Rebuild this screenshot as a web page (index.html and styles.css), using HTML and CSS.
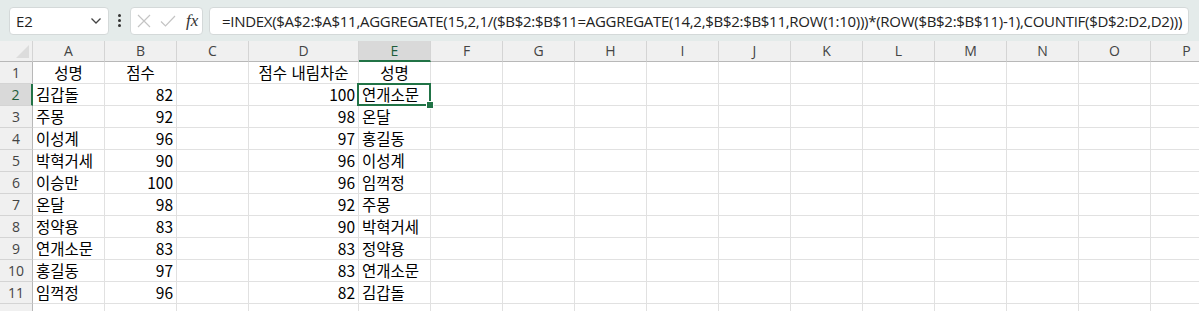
FILE: index.html
```html
<!DOCTYPE html>
<html lang="ko">
<head>
    <meta charset="UTF-8">
    <title>Excel - INDEX AGGREGATE</title>
    <link rel="stylesheet" href="styles.css">
</head>
<body>
    <div class="toolbar">
        <div class="name-box">
            <span>E2</span>
            <svg class="chevron" width="12" height="8" viewBox="0 0 12 8"><path d="M1.5 1.5 L6 6 L10.5 1.5" fill="none" stroke="#444" stroke-width="1.3"/></svg>
        </div>
        <div class="dots"><i></i><i></i><i></i></div>
        <div class="fx-box">
            <svg width="16" height="16" viewBox="0 0 16 16"><path d="M2 2 L14 14 M14 2 L2 14" stroke="#c4c4c4" stroke-width="1.2"/></svg>
            <svg width="18" height="16" viewBox="0 0 18 16"><path d="M2 8.5 L6.5 13 L16 3" fill="none" stroke="#c4c4c4" stroke-width="1.2"/></svg>
            <span class="fx">fx</span>
        </div>
        <div class="formula">=INDEX($A$2:$A$11,AGGREGATE(15,2,1/($B$2:$B$11=AGGREGATE(14,2,$B$2:$B$11,ROW(1:10)))*(ROW($B$2:$B$11)-1),COUNTIF($D$2:D2,D2)))</div>
    </div>

    <div class="sheet">
        <div class="corner"></div>
        <div class="col">A</div><div class="col">B</div><div class="col">C</div><div class="col">D</div>
        <div class="col active">E</div><div class="col">F</div><div class="col">G</div><div class="col">H</div>
        <div class="col">I</div><div class="col">J</div><div class="col">K</div><div class="col">L</div>
        <div class="col">M</div><div class="col">N</div><div class="col">O</div><div class="col">P</div>

        <div class="row">1</div>
        <div class="cell c">성명</div><div class="cell c">점수</div><div class="cell"></div>
        <div class="cell c">점수 내림차순</div><div class="cell c">성명</div>
        <div class="cell"></div><div class="cell"></div><div class="cell"></div><div class="cell"></div><div class="cell"></div><div class="cell"></div><div class="cell"></div><div class="cell"></div><div class="cell"></div><div class="cell"></div><div class="cell"></div>

        <div class="row active">2</div>
        <div class="cell">김갑돌</div><div class="cell r">82</div><div class="cell"></div>
        <div class="cell r">100</div><div class="cell selected">연개소문</div>
        <div class="cell"></div><div class="cell"></div><div class="cell"></div><div class="cell"></div><div class="cell"></div><div class="cell"></div><div class="cell"></div><div class="cell"></div><div class="cell"></div><div class="cell"></div><div class="cell"></div>

        <div class="row">3</div>
        <div class="cell">주몽</div><div class="cell r">92</div><div class="cell"></div>
        <div class="cell r">98</div><div class="cell">온달</div>
        <div class="cell"></div><div class="cell"></div><div class="cell"></div><div class="cell"></div><div class="cell"></div><div class="cell"></div><div class="cell"></div><div class="cell"></div><div class="cell"></div><div class="cell"></div><div class="cell"></div>

        <div class="row">4</div>
        <div class="cell">이성계</div><div class="cell r">96</div><div class="cell"></div>
        <div class="cell r">97</div><div class="cell">홍길동</div>
        <div class="cell"></div><div class="cell"></div><div class="cell"></div><div class="cell"></div><div class="cell"></div><div class="cell"></div><div class="cell"></div><div class="cell"></div><div class="cell"></div><div class="cell"></div><div class="cell"></div>

        <div class="row">5</div>
        <div class="cell">박혁거세</div><div class="cell r">90</div><div class="cell"></div>
        <div class="cell r">96</div><div class="cell">이성계</div>
        <div class="cell"></div><div class="cell"></div><div class="cell"></div><div class="cell"></div><div class="cell"></div><div class="cell"></div><div class="cell"></div><div class="cell"></div><div class="cell"></div><div class="cell"></div><div class="cell"></div>

        <div class="row">6</div>
        <div class="cell">이승만</div><div class="cell r">100</div><div class="cell"></div>
        <div class="cell r">96</div><div class="cell">임꺽정</div>
        <div class="cell"></div><div class="cell"></div><div class="cell"></div><div class="cell"></div><div class="cell"></div><div class="cell"></div><div class="cell"></div><div class="cell"></div><div class="cell"></div><div class="cell"></div><div class="cell"></div>

        <div class="row">7</div>
        <div class="cell">온달</div><div class="cell r">98</div><div class="cell"></div>
        <div class="cell r">92</div><div class="cell">주몽</div>
        <div class="cell"></div><div class="cell"></div><div class="cell"></div><div class="cell"></div><div class="cell"></div><div class="cell"></div><div class="cell"></div><div class="cell"></div><div class="cell"></div><div class="cell"></div><div class="cell"></div>

        <div class="row">8</div>
        <div class="cell">정약용</div><div class="cell r">83</div><div class="cell"></div>
        <div class="cell r">90</div><div class="cell">박혁거세</div>
        <div class="cell"></div><div class="cell"></div><div class="cell"></div><div class="cell"></div><div class="cell"></div><div class="cell"></div><div class="cell"></div><div class="cell"></div><div class="cell"></div><div class="cell"></div><div class="cell"></div>

        <div class="row">9</div>
        <div class="cell">연개소문</div><div class="cell r">83</div><div class="cell"></div>
        <div class="cell r">83</div><div class="cell">정약용</div>
        <div class="cell"></div><div class="cell"></div><div class="cell"></div><div class="cell"></div><div class="cell"></div><div class="cell"></div><div class="cell"></div><div class="cell"></div><div class="cell"></div><div class="cell"></div><div class="cell"></div>

        <div class="row">10</div>
        <div class="cell">홍길동</div><div class="cell r">97</div><div class="cell"></div>
        <div class="cell r">83</div><div class="cell">연개소문</div>
        <div class="cell"></div><div class="cell"></div><div class="cell"></div><div class="cell"></div><div class="cell"></div><div class="cell"></div><div class="cell"></div><div class="cell"></div><div class="cell"></div><div class="cell"></div><div class="cell"></div>

        <div class="row">11</div>
        <div class="cell">임꺽정</div><div class="cell r">96</div><div class="cell"></div>
        <div class="cell r">82</div><div class="cell">김갑돌</div>
        <div class="cell"></div><div class="cell"></div><div class="cell"></div><div class="cell"></div><div class="cell"></div><div class="cell"></div><div class="cell"></div><div class="cell"></div><div class="cell"></div><div class="cell"></div><div class="cell"></div>

        <div class="row"></div>
        <div class="cell"></div><div class="cell"></div><div class="cell"></div><div class="cell"></div><div class="cell"></div>
        <div class="cell"></div><div class="cell"></div><div class="cell"></div><div class="cell"></div><div class="cell"></div><div class="cell"></div><div class="cell"></div><div class="cell"></div><div class="cell"></div><div class="cell"></div><div class="cell"></div>
    </div>
</body>
</html>
```

FILE: styles.css
```css
* {
    margin: 0;
    padding: 0;
    box-sizing: border-box;
}

body {
    width: 1199px;
    height: 311px;
    overflow: hidden;
    background: white;
    font-family: 'Open Sans', 'Noto Sans', sans-serif;
}

/* formula bar */

.toolbar {
    height: 41px;
    background: #e4ebea;
    display: flex;
    align-items: center;
    padding-left: 9px;
}

.name-box {
    width: 100px;
    height: 28px;
    background: white;
    border: 1px solid #d4d9d9;
    border-radius: 4px;
    display: flex;
    align-items: center;
    justify-content: space-between;
    padding: 0 6px;
    font-size: 15px;
    color: #222;
}

.dots {
    width: 21px;
    display: flex;
    flex-direction: column;
    align-items: center;
    gap: 2px;
}

.dots i {
    width: 3px;
    height: 3px;
    background: #333;
    border-radius: 50%;
}

.fx-box {
    width: 73px;
    height: 28px;
    background: white;
    border: 1px solid #d4d9d9;
    border-radius: 4px;
    display: flex;
    align-items: center;
    gap: 7px;
    padding-left: 5px;
}

.fx {
    font-family: 'Liberation Serif', serif;
    font-style: italic;
    font-size: 17px;
    color: #333;
    margin-left: 2px;
}

.formula {
    margin-left: 6px;
    width: 980px;
    height: 28px;
    background: white;
    border: 1px solid #d4d9d9;
    border-radius: 4px;
    padding-left: 12px;
    line-height: 26px;
    font-size: 15px;
    letter-spacing: -0.29px;
    color: #222;
    white-space: nowrap;
    overflow: hidden;
}

/* grid */

.sheet {
    display: grid;
    grid-template-columns: 33px 72px 72px 72px 110px 72px repeat(11, 72px);
    grid-template-rows: 21px;
    grid-auto-rows: 22px;
    font-family: 'Noto Sans CJK KR', sans-serif;
    font-size: 15.5px;
    color: #000;
}

.corner {
    background: #f0f0f0;
    border-right: 1px solid #d4d4d4;
    border-bottom: 1px solid #b8b8b8;
    position: relative;
}

.corner::after {
    content: "";
    position: absolute;
    right: 3px;
    bottom: 3px;
    border-left: 13px solid transparent;
    border-bottom: 13px solid #dcdcdc;
}

.col {
    background: #f0f0f0;
    border-right: 1px solid #d4d4d4;
    border-bottom: 1px solid #b8b8b8;
    text-align: center;
    font-family: 'Open Sans', sans-serif;
    font-size: 14px;
    line-height: 20px;
    color: #444;
}

.col.active {
    background: #d9d9d9;
    border-bottom: 2px solid #217346;
    color: #1d5c3a;
}

.row {
    background: #f0f0f0;
    border-right: 1px solid #b8b8b8;
    border-bottom: 1px solid #d4d4d4;
    text-align: center;
    font-family: 'Open Sans', sans-serif;
    font-size: 14px;
    line-height: 22px;
    color: #444;
}

.row.active {
    background: #d9d9d9;
    border-right: 2px solid #217346;
    color: #1d5c3a;
}

.cell {
    border-right: 1px solid #e1e1e1;
    border-bottom: 1px solid #e1e1e1;
    padding: 0 3px;
    line-height: 21px;
    white-space: nowrap;
}

.cell.c {
    text-align: center;
}

.cell.r {
    text-align: right;
}

.cell.selected {
    position: relative;
}

.cell.selected::before {
    content: "";
    position: absolute;
    top: -1px;
    left: -2px;
    right: -1px;
    bottom: -1px;
    border: 2px solid #217346;
}

.cell.selected::after {
    content: "";
    position: absolute;
    right: -4px;
    bottom: -4px;
    width: 6px;
    height: 6px;
    background: #217346;
    border: 1px solid white;
}
```
